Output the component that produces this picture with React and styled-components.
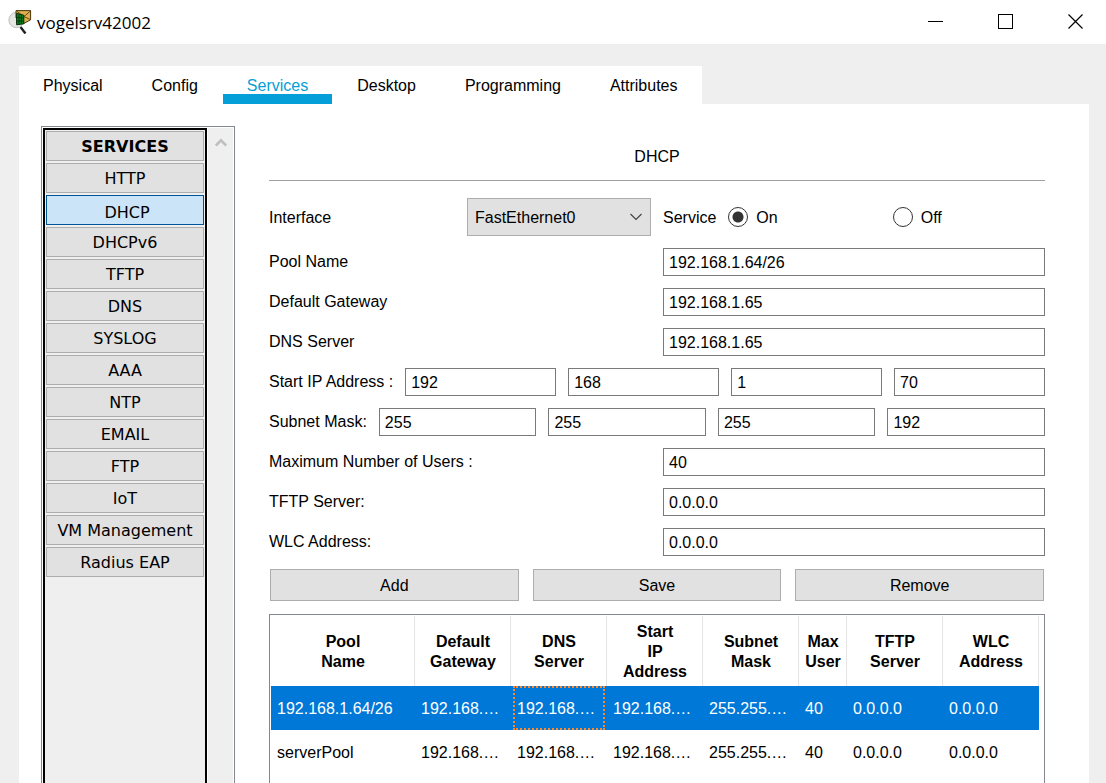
import React, { useState } from 'react';
import styled, { createGlobalStyle } from 'styled-components';

const COLOR = {
  BLUE: '#049fd9',
  BORDER: '#adadad',
  BUTTON: '#e1e1e1',
  FRAME: '#828790',
  INPUT: '#7a7a7a',
  SELECTED: '#0078d7',
  WINDOW: '#efefef',
};

const GlobalStyle = createGlobalStyle`
  *, *::before, *::after {
    box-sizing: border-box;
  }

  body {
    background: ${COLOR.WINDOW};
    color: #000;
    font-family: 'Liberation Sans', Arial, sans-serif;
    font-size: 16px;
    line-height: 20px;
    margin: 0;
  }

  button, input, select {
    color: inherit;
    font: inherit;
    margin: 0;
  }
`;

const Window = styled.div`
  display: flex;
  flex-direction: column;
  height: 100vh;
  overflow: hidden;
`;

const TitleBar = styled.header`
  align-items: center;
  background: #fff;
  display: flex;
  flex: none;
  gap: 10px;
  height: 44px;
  padding-left: 8px;
`;

const Brand = styled.div`
  align-items: center;
  display: flex;
  flex: 1;
  gap: 5px;
`;

const Title = styled.h1`
  font-family: 'Open Sans', 'Segoe UI', sans-serif;
  font-size: 17px;
  font-weight: 400;
  line-height: 24px;
  margin: 0;
  padding-top: 2px;
`;

const WindowButton = styled.button`
  align-items: center;
  background: none;
  border: 0;
  display: flex;
  height: 44px;
  justify-content: center;
  padding: 0;
  width: 60px;
`;

const Body = styled.div`
  display: flex;
  flex: 1;
  flex-direction: column;
  min-height: 0;
  padding: 22px 17px 0 19px;
`;

const Tabs = styled.nav`
  align-self: flex-start;
  background: #fff;
  display: flex;
  flex: none;
  gap: 1px;
`;

const Tab = styled.button`
  background: none;
  border: 0;
  border-bottom: 10px solid ${({ $active }) => ($active ? COLOR.BLUE : 'transparent')};
  color: ${({ $active }) => ($active ? COLOR.BLUE : '#000')};
  height: 38px;
  line-height: 16px;
  padding: 12px 24px 0;
`;

const Panel = styled.main`
  background: #fff;
  display: flex;
  flex: 1;
  gap: 34px;
  min-height: 0;
  padding: 22px 44px 0 22px;
`;

const Sidebar = styled.aside`
  border: 1px solid ${COLOR.FRAME};
  border-bottom: 0;
  display: flex;
  flex: none;
  gap: 1px;
  padding: 1px 1px 0;
  width: 194px;
`;

const ServiceList = styled.div`
  background: ${COLOR.WINDOW};
  border: 2px solid #000;
  border-bottom: 0;
  display: flex;
  flex: 1;
  flex-direction: column;
  font-family: 'DejaVu Sans', Verdana, sans-serif;
  gap: 2px;
  padding: 1px;
`;

const ServiceButton = styled.button`
  background: ${({ $active }) => ($active ? '#cce4f7' : COLOR.BUTTON)};
  border: 1px solid ${({ $active }) => ($active ? '#005499' : COLOR.BORDER)};
  font-weight: ${({ $heading }) => ($heading ? 700 : 400)};
  height: 30px;
  padding: ${({ $active }) => ($active ? '6px 0 0 4px' : '2px 0 0')};
`;

const ScrollBar = styled.div`
  background: ${COLOR.WINDOW};
  display: flex;
  justify-content: center;
  padding-top: 9px;
  width: 25px;
`;

const Content = styled.section`
  display: flex;
  flex: 1;
  flex-direction: column;
  min-width: 0;
`;

const Heading = styled.h2`
  border-bottom: 1px solid #a0a0a0;
  font-size: 16px;
  font-weight: 400;
  margin: 0 0 17px;
  padding: 21px 0 13px;
  text-align: center;
`;

const Form = styled.form`
  display: flex;
  flex-direction: column;
  gap: 12px;
`;

const Row = styled.div`
  align-items: center;
  display: grid;
  gap: 12px;
  grid-template-columns: 1fr 1fr;
`;

const OctetRow = styled.div`
  align-items: center;
  display: flex;
  gap: 12px;
`;

const InlineGroup = styled.div`
  align-items: center;
  display: flex;
  gap: 12px;
  justify-content: ${({ $spread }) => ($spread ? 'space-between' : 'flex-start')};
`;

const Label = styled.label`
  white-space: nowrap;
`;

const Caption = styled.span`
  display: block;
  padding-top: 2px;
`;

const TextInput = styled.input`
  background: #fff;
  border: 1px solid ${COLOR.INPUT};
  flex: 1;
  height: 28px;
  min-width: 0;
  outline: 0;
  padding: 2px 5px 0;
  width: 100%;
`;

const SelectBox = styled.div`
  align-items: center;
  background: ${COLOR.BUTTON};
  border: 1px solid ${COLOR.BORDER};
  display: grid;
  height: 38px;
  width: 184px;

  > * {
    grid-area: 1 / 1;
  }

  svg {
    justify-self: end;
    margin-right: 8px;
    pointer-events: none;
  }
`;

const Select = styled.select`
  appearance: none;
  background: none;
  border: 0;
  height: 36px;
  outline: 0;
  padding: 2px 24px 0 7px;
  width: 100%;
`;

const Option = styled.label`
  align-items: center;
  display: flex;
  flex: 1;
  gap: 8px;
`;

const Radio = styled.input`
  appearance: none;
  background: ${({ checked }) => (checked ? 'radial-gradient(circle, #333 5px, #fff 6px)' : '#fff')};
  border: 1px solid #333;
  border-radius: 50%;
  flex: none;
  height: 20px;
  width: 20px;
`;

const Actions = styled.div`
  display: flex;
  gap: 14px;
  padding: 1px 1px 0;
`;

const ActionButton = styled.button`
  background: ${COLOR.BUTTON};
  border: 1px solid ${COLOR.BORDER};
  flex: 1;
  height: 32px;
  padding: 2px 0 0;
`;

const TableFrame = styled.div`
  border: 1px solid ${COLOR.FRAME};
  border-bottom: 0;
  flex: 1;
  margin-top: 13px;
  min-height: 0;
  padding: 1px 5px 0 1px;
`;

const Table = styled.table`
  border-collapse: separate;
  border-spacing: 0;
  table-layout: fixed;
  width: 100%;
`;

const HeaderCell = styled.th`
  border-right: 1px solid #e5e5e5;
  height: 70px;
  padding: 2px 3px 0 4px;
`;

const HeaderText = styled.span`
  display: block;
`;

const BodyRow = styled.tr`
  background: ${({ $selected }) => ($selected ? COLOR.SELECTED : '#fff')};
  color: ${({ $selected }) => ($selected ? '#fff' : '#000')};
`;

const Cell = styled.td`
  padding: 0 2px;
`;

const CellText = styled.div`
  border: 2px dotted ${({ $focused }) => ($focused ? '#ff8728' : 'transparent')};
  height: 44px;
  line-height: 42px;
  overflow: hidden;
  padding: 0 2px;
  white-space: nowrap;
`;

const tabs = ['Physical', 'Config', 'Services', 'Desktop', 'Programming', 'Attributes'];

const services = [
  'SERVICES', 'HTTP', 'DHCP', 'DHCPv6', 'TFTP', 'DNS', 'SYSLOG', 'AAA',
  'NTP', 'EMAIL', 'FTP', 'IoT', 'VM Management', 'Radius EAP',
];

const columns = [
  { lines: ['Pool', 'Name'], width: 144 },
  { lines: ['Default', 'Gateway'], width: 96 },
  { lines: ['DNS', 'Server'], width: 96 },
  { lines: ['Start', 'IP', 'Address'], width: 96 },
  { lines: ['Subnet', 'Mask'], width: 96 },
  { lines: ['Max', 'User'], width: 48 },
  { lines: ['TFTP', 'Server'], width: 96 },
  { lines: ['WLC', 'Address'], width: 96 },
];

const pools = [
  ['192.168.1.64/26', '192.168.…', '192.168.…', '192.168.…', '255.255.…', '40', '0.0.0.0', '0.0.0.0'],
  ['serverPool', '192.168.…', '192.168.…', '192.168.…', '255.255.…', '40', '0.0.0.0', '0.0.0.0'],
];

const AppIcon = () => (
  <svg width="24" height="24" viewBox="0 0 24 24" aria-hidden="true">
    <path d="M12.5 17l5 6.5" stroke="#222" strokeWidth="2.4" />
    <circle cx="8.5" cy="10" r="7.6" fill="#e6e6e2" stroke="#bdbdb8" />
    <path d="M8 .6h14.6v9.2L16 13.4 8 8z" fill="#dcae50" stroke="#4a360c" />
    <path d="M8.5 1l7.5 5.6L22.4 1M16 6.6l6.4 3" fill="none" stroke="#6b4c12" />
    <path d="M8.6 3.4l7.2 1.8v8.6l-7.2 1z" fill="#0c8a22" stroke="#032c08" />
    <path d="M11 4v10.4M13.4 4.8v9M8.6 7.4l7 .8M8.6 11l7 0" stroke="#04350b" />
  </svg>
);

const Field = ({ id, label, value }) => (
  <Row>
    <Label htmlFor={id}>{label}</Label>
    <TextInput id={id} type="text" defaultValue={value} />
  </Row>
);

const OctetField = ({ id, label, octets }) => (
  <OctetRow>
    <Label htmlFor={`${id}-0`}>{label}</Label>
    {octets.map((octet, i) => (
      <TextInput
        key={`${id}-${i}`}
        id={`${id}-${i}`}
        type="text"
        aria-label={i > 0 ? `${label} ${i + 1}` : undefined}
        defaultValue={octet}
      />
    ))}
  </OctetRow>
);

const PoolTable = () => (
  <TableFrame>
    <Table>
      <colgroup>
        {columns.map(({ lines, width }) => <col key={lines.join('-')} width={width} />)}
      </colgroup>
      <thead>
        <tr>
          {columns.map(({ lines }) => (
            <HeaderCell key={lines.join('-')} scope="col">
              {lines.map(line => <HeaderText key={line}>{line}</HeaderText>)}
            </HeaderCell>
          ))}
        </tr>
      </thead>
      <tbody>
        {pools.map((pool, row) => (
          <BodyRow key={pool[0]} $selected={row === 0}>
            {pool.map((value, i) => (
              <Cell key={`cell-${i}`}>
                <CellText $focused={row === 0 && i === 2}>{value}</CellText>
              </Cell>
            ))}
          </BodyRow>
        ))}
      </tbody>
    </Table>
  </TableFrame>
);

const App = () => {
  const [tab, setTab] = useState('Services');
  const [service, setService] = useState('DHCP');
  const [enabled, setEnabled] = useState(true);

  return (
    <Window>
      <GlobalStyle />
      <TitleBar>
        <Brand>
          <AppIcon />
          <Title>vogelsrv42002</Title>
        </Brand>
        <WindowButton type="button" aria-label="Minimize">
          <svg width="16" height="16" shapeRendering="crispEdges"><path d="M0 7.5h15" stroke="#000" /></svg>
        </WindowButton>
        <WindowButton type="button" aria-label="Maximize">
          <svg width="16" height="16" shapeRendering="crispEdges"><path d="M.5 .5h14v14h-14z" fill="none" stroke="#000" /></svg>
        </WindowButton>
        <WindowButton type="button" aria-label="Close">
          <svg width="16" height="16"><path d="M.5 .5l14 14M14.5 .5l-14 14" stroke="#000" strokeWidth="1.2" /></svg>
        </WindowButton>
      </TitleBar>
      <Body>
        <Tabs>
          {tabs.map(name => (
            <Tab key={name} type="button" $active={name === tab} onClick={() => setTab(name)}>
              {name}
            </Tab>
          ))}
        </Tabs>
        <Panel>
          <Sidebar>
            <ServiceList>
              {services.map((name, i) => (
                <ServiceButton
                  key={name}
                  type="button"
                  $heading={i === 0}
                  $active={name === service}
                  onClick={() => setService(name)}
                >
                  {name}
                </ServiceButton>
              ))}
            </ServiceList>
            <ScrollBar>
              <svg width="12" height="10"><path d="M.8 8.6L6 3.4l5.2 5.2" fill="none" stroke="#bfbfbf" strokeWidth="2.6" /></svg>
            </ScrollBar>
          </Sidebar>
          <Content>
            <Heading>DHCP</Heading>
            <Form onSubmit={e => e.preventDefault()}>
              <Row>
                <InlineGroup $spread>
                  <Label htmlFor="interface"><Caption>Interface</Caption></Label>
                  <SelectBox>
                    <Select id="interface" defaultValue="FastEthernet0">
                      <option>FastEthernet0</option>
                    </Select>
                    <svg width="12" height="8"><path d="M.5 1L6 6.5 11.5 1" fill="none" stroke="#444" strokeWidth="1.2" /></svg>
                  </SelectBox>
                </InlineGroup>
                <InlineGroup role="radiogroup" aria-label="Service">
                  <Caption>Service</Caption>
                  <Option>
                    <Radio type="radio" name="service" checked={enabled} onChange={() => setEnabled(true)} />
                    <Caption>On</Caption>
                  </Option>
                  <Option>
                    <Radio type="radio" name="service" checked={!enabled} onChange={() => setEnabled(false)} />
                    <Caption>Off</Caption>
                  </Option>
                </InlineGroup>
              </Row>
              <Field id="pool-name" label="Pool Name" value="192.168.1.64/26" />
              <Field id="gateway" label="Default Gateway" value="192.168.1.65" />
              <Field id="dns" label="DNS Server" value="192.168.1.65" />
              <OctetField id="start-ip" label="Start IP Address :" octets={['192', '168', '1', '70']} />
              <OctetField id="mask" label="Subnet Mask:" octets={['255', '255', '255', '192']} />
              <Field id="max-users" label="Maximum Number of Users :" value="40" />
              <Field id="tftp" label="TFTP Server:" value="0.0.0.0" />
              <Field id="wlc" label="WLC Address:" value="0.0.0.0" />
              <Actions>
                <ActionButton type="button">Add</ActionButton>
                <ActionButton type="button">Save</ActionButton>
                <ActionButton type="button">Remove</ActionButton>
              </Actions>
            </Form>
            <PoolTable />
          </Content>
        </Panel>
      </Body>
    </Window>
  );
};

export default App;
